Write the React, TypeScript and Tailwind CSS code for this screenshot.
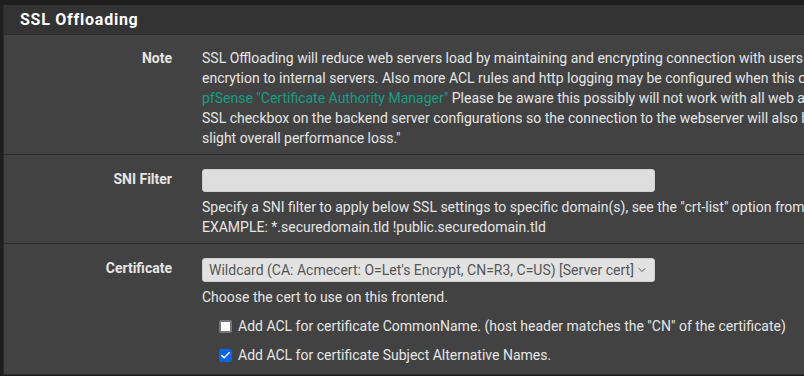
import { Check, ChevronDown } from 'lucide-react'

const font = { fontFamily: 'Roboto, "Liberation Sans", sans-serif' }

function Row({ label, children, className = '' }: { label: string; children: React.ReactNode; className?: string }) {
  return (
    <div className={`flex border-b border-[#2b2b2b] ${className}`}>
      <div className="w-[183px] shrink-0 pr-[15px] text-right text-[14px] font-bold leading-[20px] text-[#e6e6e6]">
        {label}
      </div>
      <div className="flex-1 pl-[15px] text-[14px] leading-[20px] text-[#e6e6e6]">{children}</div>
    </div>
  )
}

export default function App() {
  return (
    <div className="h-[376px] w-[804px] overflow-hidden bg-[#1e1e1e] pt-[5px] pl-[3px]" style={font}>
      <div className="w-[1100px] border-l border-[#2a2a2a] bg-[#424242]">
        <div className="h-[30px] border-b border-[#2b2b2b] bg-[#333333] pl-[16px] text-[16px] font-bold leading-[29px] tracking-[0.75px] text-white">
          SSL Offloading
        </div>

        <Row label="Note" className="pt-[13px] pb-[6px]">
          <p className="whitespace-nowrap">
            SSL Offloading will reduce web servers load by maintaining and encrypting connection with users on internet
            while sending and retrieving data without
            <br />
            encrytion to internal servers. Also more ACL rules and http logging may be configured when this option is
            used. Certificates can be imported into the
            <br />
            <span className="text-[#179c86]">pfSense "Certificate Authority Manager"</span> Please be aware this possibly
            will not work with all web applications. Some applications will require setting the
            <br />
            SSL checkbox on the backend server configurations so the connection to the webserver will also be encrypted,
            in that case there will be a
            <br />
            slight overall performance loss."
          </p>
        </Row>

        <Row label="SNI Filter" className="pt-[14px] pb-[6px]">
          <div className="h-[23px] w-[453px] rounded-[3px] border border-[#cfcfcf] bg-[#dedede]" />
          <p className="mt-[5px] whitespace-nowrap">
            Specify a SNI filter to apply below SSL settings to specific domain(s), see the "crt-list" option from
            haproxy for details.
            <br />
            EXAMPLE: *.securedomain.tld !public.securedomain.tld
          </p>
        </Row>

        <Row label="Certificate" className="pt-[14px] pb-[9px]">
          <div className="flex h-[24px] w-[453px] items-center justify-between rounded-[3px] border border-[#cfcfcf] bg-[#e2e2e2] pl-[6px] pr-[6px] text-[14px] text-[#555555]">
            <span>Wildcard (CA: Acmecert: O=Let's Encrypt, CN=R3, C=US) [Server cert]</span>
            <ChevronDown className="h-[12px] w-[12px] text-[#555555]" strokeWidth={2} />
          </div>
          <p className="mt-[5px]">Choose the cert to use on this frontend.</p>
          <label className="mt-[9px] flex items-center gap-[6px] pl-[17px]">
            <span className="h-[13px] w-[13px] rounded-[2px] border-2 border-[#777] bg-white" />
            Add ACL for certificate CommonName. (host header matches the "CN" of the certificate)
          </label>
          <label className="mt-[9px] flex items-center gap-[6px] pl-[17px]">
            <span className="flex h-[13px] w-[13px] items-center justify-center rounded-[2px] bg-[#0b63e5]">
              <Check className="h-[11px] w-[11px] text-white" strokeWidth={3.5} />
            </span>
            Add ACL for certificate Subject Alternative Names.
          </label>
        </Row>
      </div>
    </div>
  )
}
